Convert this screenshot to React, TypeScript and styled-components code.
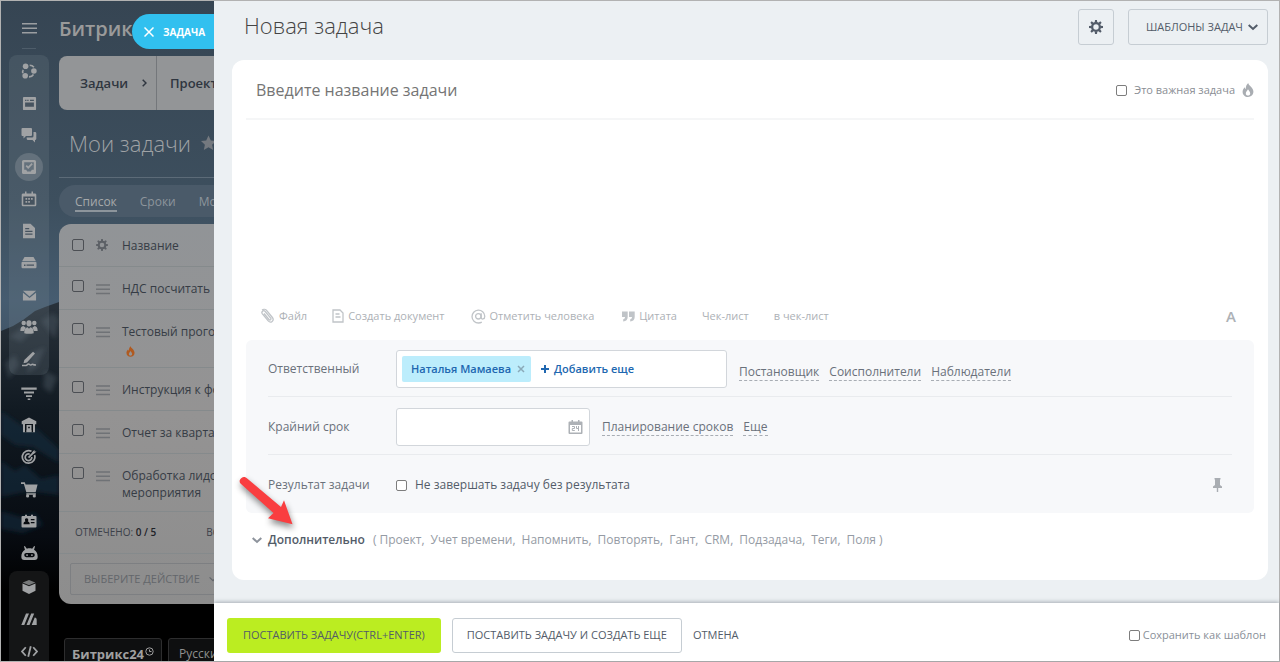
import React from 'react';
import styled, { createGlobalStyle, css } from 'styled-components';

const GlobalStyle = createGlobalStyle`
  *, *::before, *::after { box-sizing: border-box; }
  body { margin: 0; font-family: "Open Sans", "Noto Sans", sans-serif; font-size: 12px; line-height: 16px; color: #535c69; }
  button, input, textarea { font: inherit; color: inherit; }
  button { cursor: pointer; }
  h1, h2 { margin: 0; font-weight: 300; }
  a { color: inherit; text-decoration: none; }
`;

/* ---------- shell ---------- */

const Shell = styled.div`
  display: flex;
  align-items: flex-start;
  min-height: 100vh;
  border: 1px solid #b2b2b2;
  background: #ecf0f3;
`;

const Backdrop = styled.aside`
  position: sticky;
  top: 0;
  flex: none;
  width: 213px;
  height: calc(100vh - 2px);
  overflow: hidden;
  display: flex;
  background: linear-gradient(#364553 0, #3d4f5e 200px, #465c70 300px, #3a4a5a 400px, #000 560px);
`;

const Scenery = styled.svg`
  position: absolute;
  left: 0;
  top: 260px;
  width: 213px;
  height: 402px;
`;

const Rail = styled.nav`
  position: relative;
  flex: none;
  width: 58px;
  padding: 0 10px 0 8px;
  display: flex;
  flex-direction: column;
`;

const RailTop = styled.div`
  flex: none;
  height: 54px;
  display: flex;
  flex-direction: column;
  align-items: center;
  padding-top: 21px;
  gap: 14px;
`;

const RailRule = styled.span`
  width: 14px;
  height: 1px;
  background: #4e5d6a;
`;

const RailGroup = styled.div<{ $tone?: string; $grow?: boolean }>`
  display: flex;
  flex-direction: column;
  align-items: center;
  overflow: hidden;
  border-radius: ${p => (p.$grow ? '8px 8px 0 0' : '8px')};
  background: ${p => p.$tone || 'transparent'};
  margin-bottom: ${p => (p.$grow ? 0 : 2)}px;
  flex: ${p => (p.$grow ? '1 1 0' : 'none')};
`;

const RailButton = styled.button<{ $active?: boolean }>`
  flex: none;
  width: 32px;
  height: 32px;
  padding: 0;
  border: 2px solid transparent;
  border-radius: 50%;
  background: ${p => (p.$active ? '#64717c' : 'none')};
  background-clip: padding-box;
  color: #a0a2a4;
  display: flex;
  align-items: center;
  justify-content: center;
`;

const PlainIconButton = styled.button<{ $tone?: string }>`
  padding: 0;
  border: 0;
  background: none;
  display: flex;
  color: ${p => p.$tone || '#9b9ea1'};
`;

const Under = styled.div`
  position: relative;
  flex: none;
  width: 520px;
  display: flex;
  flex-direction: column;
`;

const Brand = styled.div`
  flex: none;
  height: 55px;
  font-size: 20px;
  line-height: 56px;
  font-weight: 600;
  color: #9a9a9a;
`;

const SectionNav = styled.nav`
  flex: none;
  display: flex;
  height: 54px;
  border-radius: 8px;
  overflow: hidden;
  background: #939597;
  color: #2f3640;
  font-size: 13px;
  font-weight: 600;
`;

const SectionLink = styled.a<{ $first?: boolean }>`
  display: flex;
  align-items: center;
  justify-content: space-between;
  width: 98px;
  padding: 0 9px 0 ${p => (p.$first ? 21 : 13)}px;
  border-right: 1px solid #74777b;
`;

const UnderTitle = styled.h1`
  flex: none;
  display: flex;
  align-items: center;
  gap: 9px;
  height: 68px;
  padding: 0 0 2px 10px;
  border-bottom: 1px solid #5c6b78;
  font-size: 22px;
  line-height: 28px;
  color: #9fa2a5;
`;

const Tabs = styled.nav`
  flex: none;
  display: flex;
  gap: 23px;
  height: 32px;
  margin: 7px 0;
  padding: 7px 16px 0;
  border-radius: 16px;
  background: #4a5a69;
  color: #8d959c;
`;

const Tab = styled.a<{ $active?: boolean }>`
  height: 18px;
  line-height: 20px;
  ${p => p.$active && css`color: #a6a9ab; box-shadow: 0 2px 0 #8d959c;`}
`;

const ListCard = styled.section`
  flex: none;
  padding-bottom: 9px;
  border-radius: 12px;
  background: linear-gradient(#919497, #949393 50%, #8d8d8d);
`;

const TaskTable = styled.table`
  width: 100%;
  border-collapse: collapse;
  table-layout: fixed;
  color: #363c45;
  th, td {
    padding: 13px 0 0;
    vertical-align: top;
    text-align: left;
    font-weight: 400;
    border-bottom: 1px solid #858a8c;
    line-height: 17px;
  }
`;

const TaskRow = styled.tr<{ $h: number }>`
  height: ${p => p.$h}px;
`;

const Col = styled.col<{ $w?: number }>`
  width: ${p => (p.$w ? p.$w + 'px' : 'auto')};
`;

const Check = styled.input<{ $dim?: boolean }>`
  appearance: none;
  flex: none;
  display: block;
  width: ${p => (p.$dim ? 12 : 11)}px;
  height: ${p => (p.$dim ? 12 : 11)}px;
  margin: 0;
  border: 1px solid ${p => (p.$dim ? '#4c4f54' : '#7d7d7d')};
  border-radius: 2px;
  background: ${p => (p.$dim ? 'transparent' : '#fff')};
  &:checked { background: #2fc6f6; }
`;

const CheckCell = styled.td`
  && { padding: 13px 0 0 13px; }
`;

const HeadCell = styled.th`
  && { padding: 15px 0 0 13px; }
`;

const IconCell = styled.td`
  && { padding-top: 16px; line-height: 0; color: #6f7276; }
`;

const HeadIconCell = styled.th`
  && { padding-top: 15px; line-height: 0; }
`;

const HotMark = styled.span`
  display: block;
  padding: 6px 0 0 4px;
  line-height: 0;
  color: #b05a20;
`;

const Totals = styled.div`
  display: flex;
  align-items: center;
  height: 42px;
  padding-left: 16px;
  border-bottom: 1px solid #858a8c;
  color: #3b4049;
  font-size: 10px;
  gap: 50px;
  b { color: #1d2127; font-weight: 600; }
`;

const ActionSelect = styled.button`
  display: flex;
  align-items: center;
  gap: 9px;
  height: 32px;
  margin: 9px 0 0 11px;
  padding: 0 13px;
  border: 1px solid #7d7f82;
  border-radius: 2px;
  background: none;
  color: #63666b;
  font-size: 11px;
  font-weight: 500;
`;

const FootChips = styled.div`
  flex: none;
  display: flex;
  gap: 6px;
  margin: 34px 0 0 5px;
`;

const Chip = styled.a<{ $brand?: boolean }>`
  display: flex;
  gap: 1px;
  height: 28px;
  padding: 5px ${p => (p.$brand ? 7 : 10)}px 0;
  border: 1px solid #2d2d2e;
  border-radius: 3px;
  background: #0e0f10;
  color: ${p => (p.$brand ? '#a0a0a0' : '#8f8f8f')};
  font-size: ${p => (p.$brand ? 13 : 12)}px;
  line-height: 20px;
  font-weight: ${p => (p.$brand ? 700 : 400)};
  svg { margin-top: 3px; }
`;

const PanelTag = styled.button`
  position: absolute;
  right: 0;
  top: 13px;
  display: flex;
  align-items: center;
  gap: 9px;
  width: 82px;
  height: 35px;
  padding: 0 0 0 12px;
  border: 0;
  border-radius: 18px 0 0 18px;
  background: #31c0ef;
  color: #fff;
  font-size: 10px;
  font-weight: 700;
`;

/* ---------- task panel ---------- */

const Panel = styled.main`
  flex: 1;
  min-width: 0;
  min-height: calc(100vh - 2px);
  display: flex;
  flex-direction: column;
  background: #ecf0f3;
`;

const PanelHead = styled.header`
  display: flex;
  align-items: flex-start;
  gap: 14px;
  height: 59px;
  padding: 8px 11px 0 30px;
`;

const PanelTitle = styled.h2`
  flex: 1;
  font-size: 22px;
  line-height: 32px;
  color: #444;
`;

const Outline = styled.button<{ $pad: number; $white?: boolean }>`
  display: flex;
  align-items: center;
  gap: 5px;
  height: ${p => (p.$white ? 35 : 36)}px;
  padding: 0 ${p => p.$pad}px;
  border: 1px solid #c6cdd3;
  border-radius: 3px;
  background: ${p => (p.$white ? '#fff' : 'none')};
  color: #535c69;
  font-size: 11px;
  font-weight: 500;
  white-space: nowrap;
`;

const TemplateText = styled.span`
  padding-left: 8px;
`;

const Card = styled.section`
  flex: 1;
  display: flex;
  flex-direction: column;
  margin: 0 11px 23px 18px;
  padding: 0 14px;
  border-radius: 12px;
  background: #fff;
`;

const TitleRow = styled.div`
  display: flex;
  align-items: center;
  height: 60px;
  padding: 2px 0 0 10px;
  border-bottom: 2px solid #f5f6f7;
`;

const TitleInput = styled.input`
  flex: 1;
  min-width: 0;
  padding: 0;
  border: 0;
  outline: 0;
  font-size: 16px;
  line-height: 24px;
  background: none;
  &::placeholder { color: #757575; opacity: 1; }
`;

const CheckLabel = styled.label<{ $tone: string; $size: number; $gap: number }>`
  display: flex;
  align-items: center;
  gap: ${p => p.$gap}px;
  color: ${p => p.$tone};
  font-size: ${p => p.$size}px;
`;

const Muted = styled.span`
  display: flex;
  color: #a9adb2;
`;

const Editor = styled.textarea`
  flex: 1;
  min-height: 120px;
  border: 0;
  outline: 0;
  resize: none;
  padding: 12px;
  background: none;
`;

const Tools = styled.div`
  display: flex;
  align-items: center;
  height: 48px;
  padding: 0 18px 0 14px;
`;

const Tool = styled.button<{ $after: number }>`
  display: flex;
  align-items: center;
  gap: 4px;
  margin-right: ${p => p.$after}px;
  padding: 0;
  border: 0;
  background: none;
  color: #adb1b6;
  font-size: 11px;
  white-space: nowrap;
  svg { color: #c0c4c8; }
`;

const ToolEnd = styled(Tool)`
  margin-left: auto;
  font-size: 15px;
  font-weight: 600;
`;

const Options = styled.div`
  padding: 0 22px;
  border-radius: 6px;
  background: #f7f8fa;
`;

const OptionRow = styled.div`
  display: flex;
  align-items: center;
  height: 58px;
  padding-top: 2px;
  border-bottom: 1px solid #e9ebee;
  &:first-child { height: 57px; }
  &:last-child { border-bottom: 0; }
`;

const OptionName = styled.label`
  flex: none;
  width: 128px;
  color: #6a717b;
`;

const Picker = styled.div<{ $w: number }>`
  flex: 0 1 ${p => p.$w}px;
  min-width: 0;
  display: flex;
  align-items: center;
  gap: 10px;
  height: 38px;
  margin-right: 12px;
  padding: 0 6px 0 5px;
  border: 1px solid #d2d6db;
  border-radius: 3px;
  background: #fff;
`;

const Person = styled.span`
  display: flex;
  align-items: center;
  gap: 6px;
  height: 26px;
  padding: 0 6px 0 9px;
  border-radius: 2px;
  background: #bcedfc;
  color: #2067b0;
  font-size: 11px;
  font-weight: 600;
  white-space: nowrap;
`;

const PersonRemove = styled.button`
  display: flex;
  padding: 0;
  border: 0;
  background: none;
  color: #8aa9b8;
`;

const AddMore = styled.button`
  display: flex;
  align-items: center;
  gap: 5px;
  padding: 0;
  border: 0;
  background: none;
  color: #2067b0;
  font-size: 11px;
  font-weight: 600;
  white-space: nowrap;
`;

const DateInput = styled.input`
  flex: 1;
  min-width: 0;
  height: 30px;
  border: 0;
  outline: 0;
  background: none;
`;

const Links = styled.div<{ $low?: boolean }>`
  display: flex;
  gap: 10px;
  padding-top: ${p => (p.$low ? 6 : 2)}px;
`;

const DashLink = styled.a`
  border-bottom: 1px dashed #a8adb4;
  color: #6a717b;
  white-space: nowrap;
`;

const PinSlot = styled.span`
  margin-left: auto;
  padding-right: 9px;
`;

const Extra = styled.div`
  display: flex;
  align-items: center;
  height: 54px;
  margin-bottom: 13px;
  padding-left: 6px;
  color: #959ba4;
`;

const ExtraToggle = styled.button`
  display: flex;
  align-items: center;
  gap: 6px;
  margin-right: 8px;
  padding: 0;
  border: 0;
  background: none;
  color: #535c69;
  font-weight: 600;
  svg { color: #8d939c; }
`;

const ExtraList = styled.span`
  display: flex;
  gap: 6px;
  white-space: nowrap;
`;

const Footer = styled.footer`
  display: flex;
  align-items: center;
  height: 58px;
  padding: 6px 13px 0;
  background: #fff;
  box-shadow: 0 -1px 4px rgba(60, 70, 80, 0.4);
`;

const Submit = styled.button`
  height: 35px;
  margin-right: 11px;
  padding: 0 16px;
  border: 0;
  border-radius: 3px;
  background: #bbed21;
  color: #535c69;
  font-size: 11px;
  font-weight: 500;
  white-space: nowrap;
`;

const Cancel = styled.button`
  margin-right: auto;
  padding: 0 11px;
  border: 0;
  background: none;
  color: #535c69;
  font-size: 11px;
  font-weight: 500;
`;

const Arrow = styled.svg`
  position: absolute;
  left: 230px;
  top: 472px;
  pointer-events: none;
  filter: drop-shadow(1px 4px 3px rgba(0, 0, 0, 0.45));
`;

/* ---------- icons ---------- */

const I = ({ s = 16, children }: { s?: number; children: React.ReactNode }) => (
  <svg width={s} height={s} viewBox="0 0 16 16" fill="currentColor" aria-hidden="true">{children}</svg>
);

const cut = '#46535f';

const Burger = ({ w = 15 }) => (
  <svg width={w} height="12" viewBox="0 0 15 12" fill="currentColor" aria-hidden="true">
    <path d="M0 1h15v1.500H0zM0 5.500h15V7H0zM0 10h15v1.500H0z" />
  </svg>
);

const Chevron = ({ w = 10, sw = 2 }) => (
  <svg width={w} height={w} viewBox="0 0 10 10" fill="none" stroke="currentColor" strokeWidth={sw} aria-hidden="true">
    <path d="M.7 3l4.300 4 4.300-4" />
  </svg>
);

const Gear = ({ s = 14 }) => (
  <I s={s}>
    <circle cx="8" cy="8" r="4.400" fill="none" stroke="currentColor" strokeWidth="2.600" />
    {[0, 45, 90, 135, 180, 225, 270, 315].map(a => <path key={a} d="M6.500 3 6.900 0h2.200l.4 3z" transform={`rotate(${a} 8 8)`} />)}
  </I>
);

const Flame = ({ w = 12, h = 14 }) => (
  <svg width={w} height={h} viewBox="0 0 12 14" fill="currentColor" fillRule="evenodd" aria-hidden="true">
    <path d="M6.200 0C6.600 2.600 11.400 4.600 11.400 8.600 11.400 11.900 9 14 6 14S.6 11.900.6 8.700C.6 6.800 1.600 5.300 2.700 4.200c.2.900.5 1.500 1.100 1.900C3.600 3.500 4.700 1.300 6.200 0zM6 6.200C5.400 7.600 3.800 8.700 3.800 10.400c0 1.300 1 2.200 2.200 2.200s2.200-.9 2.200-2.200C8.200 8.700 6.800 7.700 6 6.200z" />
  </svg>
);

const group1: { name: string; icon: React.ReactNode; active?: boolean }[] = [
  { name: 'CoPilot', icon: <I><circle cx="4.600" cy="3.200" r="2.800" /><circle cx="12.900" cy="8" r="2.800" /><circle cx="4.200" cy="12.800" r="2.800" /><path d="M8.700 2.300c2 0 3.300.8 4.200 2M2.200 6.800c-.7 1.200-.7 2.300-.2 3.300M8 13.900c2 0 3.500-.8 4.500-2.400" fill="none" stroke="currentColor" strokeWidth="1.600" /></I> },
  { name: 'Новости', icon: <I s={15}><rect x="1" y="1" width="14" height="14" rx="1" /><path fill={cut} d="M3.300 4h1.400v1.300H3.300zM5.600 4H7v1.300H5.600zM8.500 4h4.200v1.300H8.500zM3.300 7h9.400v4.500H3.300z" /></I> },
  { name: 'Чат', icon: <I><path d="M1.500 1h8.500a1 1 0 011 1v6a1 1 0 01-1 1H5l-2.500 2.500V9H1.500a1 1 0 01-1-1V2a1 1 0 011-1z" /><path d="M12.500 5H14a1.300 1.300 0 011.300 1.300v5.500A1.300 1.300 0 0114 13v2.500L11.500 13H7a1.300 1.300 0 01-1.300-1.300V10.500h5.300a1.500 1.500 0 001.500-1.500z" /></I> },
  { name: 'Задачи', active: true, icon: <I><rect x="1" y="1" width="14" height="14" rx="1.500" /><path fill="#64717c" d="M3.200 3.200h9.600v7.500h-2l-1 1.700H6.200l-1-1.700h-2z" /><path d="M5.200 6.700l2 2 4-4" fill="none" stroke="currentColor" strokeWidth="1.700" /></I> },
  { name: 'Календарь', icon: <I><path d="M2 2.500h2V.5h1.500v2h5v-2H12v2h2A1.300 1.300 0 0115.300 4v10A1.300 1.300 0 0114 15.300H2A1.300 1.300 0 01.7 14V4A1.300 1.300 0 012 2.500z" /><path fill={cut} d="M2.300 5.500h11.400v8.200H2.300z" /><path d="M4.500 7h1.700v1.700H4.500zM7.200 7h1.700v1.700H7.200zM10 7h1.700v1.700H10zM4.500 10h1.700v1.700H4.500zM7.200 10h1.700v1.700H7.200z" /></I> },
  { name: 'Документы', icon: <I><path d="M2 .7h7.500L14 5v10.300H2z" /><path fill={cut} d="M4.200 5h4v1.200h-4zM4.200 7.700h7.300v1.200H4.200zM4.200 10.500h7.300v1.200H4.200z" /></I> },
  { name: 'Диск', icon: <I><path d="M3.500 2h9l2.300 4H1.200z" /><rect x=".5" y="6.800" width="15" height="6.500" rx="1.200" /><path fill={cut} d="M3 9.500h1.500V11H3zM5.500 9.500h7.500v1.300H5.500z" /></I> },
  { name: 'Почта', icon: <I s={15}><path d="M1 3h14l-7 6z" /><path d="M1 5l7 5.700L15 5v8.300H1z" /></I> },
  { name: 'Группы', icon: <I s={18}><circle cx="3.300" cy="4.500" r="2" /><circle cx="12.700" cy="4.500" r="2" /><ellipse cx="8" cy="4.700" rx="2.300" ry="2.800" /><path d="M.3 11.500c0-3 1-4 2.600-4.300L5 8.500l-1.500 3zM15.700 11.500c0-3-1-4-2.600-4.300L11 8.500l1.500 3zM3.800 13.500c0-3.700 1.200-4.900 3-5.200L8 9.500l1.200-1.200c1.800.3 3 1.500 3 5.200-2.500.8-5.900.8-8.400 0z" /></I> },
  { name: 'Подпись', icon: <I><path d="M12 .8l2 1.700L6 11.500l-3.500.7.800-3.200z" /><path d="M1 14.500h4c1.500 0 1-1.500 2.500-1.500s1 1.500 2.500 1 1-1 2-.5 1.500.5 3 .5" fill="none" stroke="currentColor" strokeWidth="1.500" /></I> },
];

const group2: { name: string; icon: React.ReactNode }[] = [
  { name: 'CRM', icon: <I><path d="M.3 2.500h15.400v2.200H.3zM3 6.500h10v2H3zM5 10.200h6v1.800H5zM6.700 13.500h2.600v1.500H6.700z" /></I> },
  { name: 'Склад', icon: <I><path d="M8 .6l7.300 3.600v3h-1.300v8H2v-8H.7v-3z" /><path fill="#0a1016" d="M4 7h8v8.200h-1.300V13H5.300v2.200H4z" /><path d="M5.500 8h5v5h-5z" /><path d="M7.200 9.700h1.600v1.600H7.200z" fill="#0a1016" /></I> },
  { name: 'Маркетинг', icon: <I><g fill="none" stroke="currentColor" strokeWidth="1.700"><path d="M10.500 2.300A6.300 6.300 0 1013.600 6" /><path d="M8.700 5.200A3.300 3.300 0 1010.800 8" /><path d="M7.500 8.700L13 3.200" /></g><path d="M11 3.500L13.500.7v1.800h2L12.700 5z" /></I> },
  { name: 'Магазин', icon: <I s={17}><path d="M0 1.200h3.600l.7 2h11.300l-1.800 7.500H5L2.700 2.900H0zM5 11.500h9V13H5z" /><circle cx="6.200" cy="14" r="1.500" /><circle cx="12.500" cy="14" r="1.500" /></I> },
  { name: 'Контакты', icon: <I><path d="M1.500 3H4V1.800h2V3h4V1.800h2V3h2.500a1 1 0 011 1v9.500a1 1 0 01-1 1h-13a1 1 0 01-1-1V4a1 1 0 011-1z" /><path fill="#070b10" d="M5.700 5.300a1.700 1.700 0 011 3c1.300.5 2 1.200 2 3H2.500c0-1.800.7-2.500 2-3a1.700 1.700 0 011.200-3zM9.800 6h3.700v1.300H9.800zM9.800 9h3.700v1.300H9.800z" /></I> },
  { name: 'Роботы', icon: <I s={17}><path d="M2.800 1.500l.8-.5L5.500 3.600c1.600-.6 3.400-.6 5 0L12.400 1l.8.500-.9 3C14.500 5.700 15.700 8 15.700 11c0 2-1 3-2.700 3H3C1.300 14 .3 13 .3 11c0-3 1.200-5.300 3.400-6.500z" /><rect x="3" y="7.500" width="10" height="4" rx="2" fill="#05080c" /><circle cx="5.700" cy="9.500" r=".9" /><circle cx="10.300" cy="9.500" r=".9" /></I> },
];

const group3: { name: string; icon: React.ReactNode }[] = [
  { name: 'Приложения', icon: <I><path d="M8 1l6.300 2.600L8 6.300 1.700 3.600z" opacity=".7" /><path d="M1.500 4.500L8 7.200l6.500-2.700v7.300L8 15l-6.500-3.200z" /></I> },
  { name: 'Автоматизация', icon: <I><path d="M.3 14L5 2.500h3L3.300 14zM5.500 14l4.700-11.500h3L8.500 14zM10.700 14l3-7.500c1.500 0 2 1 2 2.500v5z" /></I> },
  { name: 'Разработчикам', icon: <I s={17}><path d="M4.500 4L1 8l3.500 4M11.500 4L15 8l-3.500 4M9.200 3l-2.400 10" fill="none" stroke="currentColor" strokeWidth="1.700" /></I> },
];

const tasks: { h: number; text: React.ReactNode; hot?: boolean }[] = [
  { h: 43, text: 'НДС посчитать' },
  { h: 58, text: 'Тестовый прогон', hot: true },
  { h: 43, text: 'Инструкция к форме' },
  { h: 43, text: 'Отчет за квартал' },
  { h: 58, text: <>Обработка лидов<br />мероприятия</> },
];

const extras = ['( Проект,', 'Учет времени,', 'Напомнить,', 'Повторять,', 'Гант,', 'CRM,', 'Подзадача,', 'Теги,', 'Поля )'];

export default function App() {
  return (
    <Shell>
      <GlobalStyle />
      <Backdrop>
        <Scenery viewBox="0 0 213 402" preserveAspectRatio="none" aria-hidden="true">
          <defs>
            <linearGradient id="rock" x1="0" y1="0" x2="0" y2="1">
              <stop offset="0" stopColor="#29323b" />
              <stop offset=".3" stopColor="#111a22" />
              <stop offset=".65" stopColor="#070b11" />
              <stop offset=".8" stopColor="#000" />
            </linearGradient>
            <filter id="soft"><feGaussianBlur stdDeviation="2" /></filter>
          </defs>
          <path d="M0 70l12-5 10-6 12-9 10-4 14-5 20 8 40 20 95 30v303H0z" fill="url(#rock)" />
          <g filter="url(#soft)">
            <path d="M8 76l14-10 10 3-12 12zM40 60l12-8 6 6-4 20zM4 102l10-8 4 10-10 14zM30 92l14-6-8 20-10 6zM44 110l12 6-6 16-8-6z" fill="#46515c" opacity=".5" />
            <path d="M0 150l20 14 16 4 22 20v14l-26-16-18-2-14-10zM0 200l14 10 10-6 16 14 18-4v20l-30-4-28 6zM0 250l20 6 14-4 8 12-20 8-22-4z" fill="#1b3145" opacity=".5" />
          </g>
        </Scenery>
        <Rail aria-label="Главное меню">
          <RailTop>
            <PlainIconButton aria-label="Меню"><Burger /></PlainIconButton>
            <RailRule />
          </RailTop>
          <RailGroup $tone="rgba(120,132,142,0.22)">
            {group1.map(g => <RailButton key={g.name} aria-label={g.name} $active={g.active}>{g.icon}</RailButton>)}
          </RailGroup>
          <RailGroup>
            {group2.map(g => <RailButton key={g.name} aria-label={g.name}>{g.icon}</RailButton>)}
          </RailGroup>
          <RailGroup $tone="#141516" $grow>
            {group3.map(g => <RailButton key={g.name} aria-label={g.name}>{g.icon}</RailButton>)}
          </RailGroup>
        </Rail>

        <Under>
          <Brand>Битрик</Brand>
          <SectionNav>
            <SectionLink href="#tasks" $first>
              Задачи
              <svg width="5" height="8" viewBox="0 0 5 8" fill="none" stroke="currentColor" strokeWidth="1.500"><path d="M.7.7L4 4 .7 7.300" /></svg>
            </SectionLink>
            <SectionLink href="#projects">Проекты</SectionLink>
          </SectionNav>
          <UnderTitle>
            Мои задачи
            <svg width="17" height="16" viewBox="0 0 16 16" fill="#74797f" aria-hidden="true"><path d="M8 .5l2.300 5 5.200.6-3.900 3.600 1.100 5.300L8 12.300 3.300 15l1.100-5.300L.5 6.100l5.200-.6z" /></svg>
          </UnderTitle>
          <Tabs>
            <Tab href="#list" $active>Список</Tab>
            <Tab href="#terms">Сроки</Tab>
            <Tab href="#plan">Мой план</Tab>
          </Tabs>
          <ListCard>
            <TaskTable>
              <colgroup><Col $w={37} /><Col $w={26} /><Col /></colgroup>
              <thead>
                <TaskRow $h={42}>
                  <HeadCell><Check type="checkbox" aria-label="Выбрать все" $dim /></HeadCell>
                  <HeadIconCell><PlainIconButton aria-label="Настроить столбцы" $tone="#5c6066"><Gear s={12} /></PlainIconButton></HeadIconCell>
                  <th>Название</th>
                </TaskRow>
              </thead>
              <tbody>
                {tasks.map((t, i) => (
                  <TaskRow $h={t.h} key={i}>
                    <CheckCell><Check type="checkbox" aria-label={`Задача ${i + 1}`} $dim /></CheckCell>
                    <IconCell><Burger w={14} /></IconCell>
                    <td>{t.text}{t.hot && <HotMark><Flame w={9} h={11} /></HotMark>}</td>
                  </TaskRow>
                ))}
              </tbody>
            </TaskTable>
            <Totals><span>ОТМЕЧЕНО: <b>0 / 5</b></span><span>ВСЕГО: 5</span></Totals>
            <ActionSelect>ВЫБЕРИТЕ ДЕЙСТВИЕ <Chevron w={8} sw={1.5} /></ActionSelect>
          </ListCard>
          <FootChips>
            <Chip href="#b24" $brand>
              Битрикс24
              <svg width="9" height="9" viewBox="0 0 9 9" fill="none" stroke="currentColor"><circle cx="4.500" cy="4.500" r="3.700" /><path d="M4.500 2.500v2h2" /></svg>
            </Chip>
            <Chip href="#lang">Русский</Chip>
          </FootChips>
        </Under>
        <PanelTag aria-label="Закрыть задачу">
          <svg width="10" height="10" viewBox="0 0 10 10" stroke="#fff" strokeWidth="1.500"><path d="M.5.5l9 9M9.500.5l-9 9" /></svg>
          ЗАДАЧА
        </PanelTag>
      </Backdrop>

      <Panel>
        <PanelHead>
          <PanelTitle>Новая задача</PanelTitle>
          <Outline $pad={10} aria-label="Настройки"><Gear s={14} /></Outline>
          <Outline $pad={9}><TemplateText>ШАБЛОНЫ ЗАДАЧ</TemplateText><Chevron w={10} /></Outline>
        </PanelHead>

        <Card>
          <TitleRow>
            <TitleInput aria-label="Название задачи" placeholder="Введите название задачи" />
            <CheckLabel $tone="#8a8e94" $size={11} $gap={7}>
              <Check type="checkbox" />Это важная задача
              <Muted><Flame /></Muted>
            </CheckLabel>
          </TitleRow>
          <Editor aria-label="Описание задачи" />
          <Tools>
            <Tool $after={25}>
              <svg width="15" height="16" viewBox="0 0 15 16" fill="none" stroke="currentColor" strokeWidth="1.300"><path d="M4 5.500l5 6c1 1.200 2.700-.2 1.700-1.400L5.200 3.500C3.500 1.600.8 3.700 2.400 5.800l5.800 7.100c2.600 2.800 6.500-.3 4.200-3.400L7 2.800C5.800 1.300 3.500.9 2 2" /></svg>
              Файл
            </Tool>
            <Tool $after={26}>
              <svg width="12" height="14" viewBox="0 0 12 14" fill="none" stroke="currentColor" strokeWidth="1.300"><path d="M1 1h7l3 3v9H1zM3.500 5h4M3.500 8h5" /></svg>
              Создать документ
            </Tool>
            <Tool $after={28}>
              <svg width="15" height="15" viewBox="0 0 15 15" fill="none" stroke="currentColor" strokeWidth="1.300"><circle cx="7.300" cy="7.300" r="2.700" /><path d="M10.200 4.300v4.200c0 2.400 3.600 2 3.600-1.300A6.400 6.400 0 107.500 14c1.300 0 2.300-.3 3.300-.9" /></svg>
              Отметить человека
            </Tool>
            <Tool $after={25}>
              <svg width="13" height="11" viewBox="0 0 13 11" fill="currentColor"><path d="M0 .5h5.700V6c0 2.800-1.700 4.300-4.500 4.500V8.300C2.500 8 3 7.300 3 6H0zM7 .5h5.700V6c0 2.800-1.700 4.300-4.500 4.500V8.300c1.300-.3 1.800-1 1.800-2.300H7z" /></svg>
              Цитата
            </Tool>
            <Tool $after={25}>Чек-лист</Tool>
            <Tool $after={0}>в чек-лист</Tool>
            <ToolEnd $after={0}>A</ToolEnd>
          </Tools>

          <Options>
            <OptionRow>
              <OptionName as="span">Ответственный</OptionName>
              <Picker $w={331}>
                <Person>
                  Наталья Мамаева
                  <PersonRemove aria-label="Убрать">
                    <svg width="8" height="8" viewBox="0 0 8 8" stroke="currentColor" strokeWidth="1.500"><path d="M1 1l6 6M7 1L1 7" /></svg>
                  </PersonRemove>
                </Person>
                <AddMore>
                  <svg width="8" height="8" viewBox="0 0 8 8" stroke="currentColor" strokeWidth="2"><path d="M4 0v8M0 4h8" /></svg>
                  Добавить еще
                </AddMore>
              </Picker>
              <Links $low>
                <DashLink href="#author">Постановщик</DashLink>
                <DashLink href="#co">Соисполнители</DashLink>
                <DashLink href="#watch">Наблюдатели</DashLink>
              </Links>
            </OptionRow>
            <OptionRow>
              <OptionName htmlFor="deadline">Крайний срок</OptionName>
              <Picker $w={194}>
                <DateInput id="deadline" />
                <PlainIconButton aria-label="Открыть календарь">
                  <svg width="15" height="14" viewBox="0 0 15 14" fill="#adb1b6"><path d="M1.500 1.500h2V0H5v1.500h5V0h1.500v1.500h2a1 1 0 011 1V13a1 1 0 01-1 1h-12a1 1 0 01-1-1V2.500a1 1 0 011-1z" /><path d="M2 5h11v7.500H2z" fill="#fff" /><path d="M4 6.500h2.500v2H4.300v2h2.500M8.500 6v2.500h2.500M10.500 6v5" fill="none" stroke="#adb1b6" /></svg>
                </PlainIconButton>
              </Picker>
              <Links>
                <DashLink href="#plan-dates">Планирование сроков</DashLink>
                <DashLink href="#more">Еще</DashLink>
              </Links>
            </OptionRow>
            <OptionRow>
              <OptionName as="span">Результат задачи</OptionName>
              <CheckLabel $tone="#535c69" $size={12} $gap={8}>
                <Check type="checkbox" />Не завершать задачу без результата
              </CheckLabel>
              <PinSlot>
                <PlainIconButton aria-label="Закрепить">
                  <svg width="11" height="14" viewBox="0 0 11 14" fill="#a9adb2"><path d="M2.500 0h6v1.500H8V7l2 1.500V10H6.200v4H4.800v-4H1V8.500L3 7V1.500h-.5z" /></svg>
                </PlainIconButton>
              </PinSlot>
            </OptionRow>
          </Options>

          <Extra>
            <ExtraToggle><Chevron />Дополнительно</ExtraToggle>
            <ExtraList>{extras.map(e => <span key={e}>{e}</span>)}</ExtraList>
          </Extra>
        </Card>

        <Footer>
          <Submit>ПОСТАВИТЬ ЗАДАЧУ(CTRL+ENTER)</Submit>
          <Outline $pad={14} $white>ПОСТАВИТЬ ЗАДАЧУ И СОЗДАТЬ ЕЩЕ</Outline>
          <Cancel>ОТМЕНА</Cancel>
          <CheckLabel $tone="#8a9099" $size={11} $gap={3}>
            <Check type="checkbox" />Сохранить как шаблон
          </CheckLabel>
        </Footer>
      </Panel>

      <Arrow width="70" height="66" viewBox="230 472 70 66" aria-hidden="true">
        <path d="M241.500 478c2-1.500 4-1 6 .7l33.500 28.300 3-6.700 8.500 24-24.500-6 5.500-5.300-33-29.500c-1.500-1.800-1-4.300 1-5.500z" fill="#f93e40" />
      </Arrow>
    </Shell>
  );
}
